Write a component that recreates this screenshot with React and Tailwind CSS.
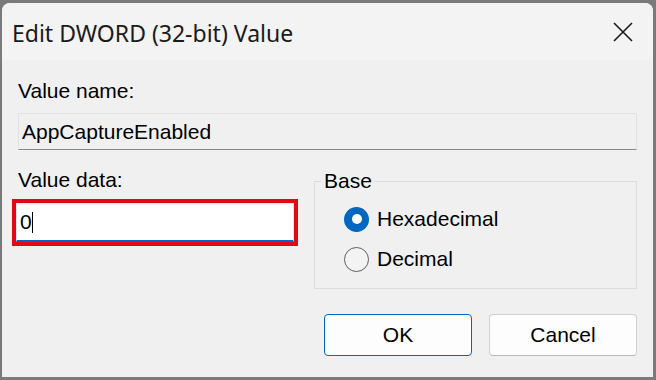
import React from 'react';

const Radio = ({ checked, label }) => (
  <div className="flex items-center h-[26px]">
    {checked ? (
      <span className="w-[25px] h-[25px] rounded-full bg-[#0067c0] flex items-center justify-center">
        <span className="w-[10px] h-[10px] rounded-full bg-white" />
      </span>
    ) : (
      <span className="w-[25px] h-[25px] rounded-full border-[1.5px] border-[#5f5f5f] bg-[#f3f3f3]" />
    )}
    <span className="ml-[8px] text-[21px] leading-[24px] text-black">{label}</span>
  </div>
);

const App = () => {
  return (
    <div className="w-[656px] h-[380px] bg-[#7a7a7a] pt-[3px] pl-[2px] pr-[3px] pb-[3px] font-['Liberation_Sans',Arial,sans-serif]">
      <div className="h-full bg-[#f0f0f0] rounded-t-[8px] overflow-hidden flex flex-col">
        {/* Title bar */}
        <div className="h-[57px] bg-[#f3f3f3] flex items-center justify-between pl-[10px] pr-[20px] shrink-0">
          <span className="mt-[3px] font-['Noto_Sans',sans-serif] text-[23px] text-[#1a1a1a] leading-none">
            Edit DWORD (32-bit) Value
          </span>
          <svg width="20" height="20" viewBox="0 0 20 20">
            <path d="M1 1 L19 19 M19 1 L1 19" stroke="#1a1a1a" strokeWidth="1.6" />
          </svg>
        </div>

        {/* Body */}
        <div className="flex-1 px-[16px]">
          <div className="pt-[19px] text-[21px] leading-[24px] text-black">Value name:</div>
          <div className="mt-[10px] h-[37px] border border-[#e2e2e2] border-b-[#8a8a8a] flex items-center pl-[3px] text-[21px] text-black">
            AppCaptureEnabled
          </div>

          <div className="flex">
            <div className="w-[280px] shrink-0">
              <div className="mt-[18px] text-[21px] leading-[24px] text-black">Value data:</div>
              <div className="mt-[7px] -ml-[6px] w-[286px] h-[47px] border-[4px] border-[#e00a17]">
                <div className="h-full bg-white border border-[#e5e5e5] border-b-2 border-b-[#0067c0] flex items-center pl-[3px] text-[21px] text-black">
                  <span>0</span>
                  <span className="w-px h-[21px] bg-black" />
                </div>
              </div>
            </div>

            <div className="ml-[16px] flex-1 mt-[31px] h-[108px] relative border border-[#dcdcdc] pl-[29px] pt-[24px] flex flex-col gap-[14px]">
              <span className="absolute -top-[13px] left-[7px] px-[2px] bg-[#f0f0f0] text-[21px] leading-[24px] text-black">
                Base
              </span>
              <Radio checked label="Hexadecimal" />
              <Radio label="Decimal" />
            </div>
          </div>

          <div className="mt-[25px] flex justify-end gap-[17px]">
            <button className="w-[148px] h-[42px] bg-[#fdfdfd] border border-[#0067c0] rounded-[4px] text-[21px] text-black">
              OK
            </button>
            <button className="w-[148px] h-[42px] bg-[#fdfdfd] border border-[#d0d0d0] border-b-[#b8b8b8] rounded-[4px] text-[21px] text-black">
              Cancel
            </button>
          </div>
        </div>
      </div>
    </div>
  );
};

export default App;
